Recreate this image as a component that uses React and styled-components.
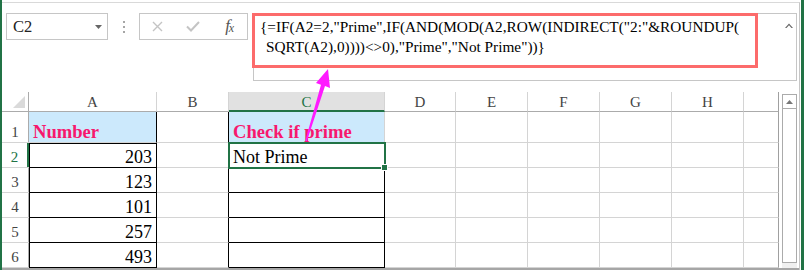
import React from 'react';
import styled, { createGlobalStyle } from 'styled-components';

const GREEN = '#217346';
const GRID = '#d4d4d4';
const HDR = '#ababab';
const BLUE = '#cce9fc';
const PINK = '#f7186e';

const Global = createGlobalStyle`
  html, body { margin: 0; padding: 0; background: #fff; }
  body { width: 804px; height: 270px; overflow: hidden; font-family: "Liberation Serif", "Times New Roman", serif; }
`;

const Frame = styled.div`
  position: relative;
  width: 804px;
  height: 270px;
  box-sizing: border-box;
  border-left: 2px solid ${GREEN};
  border-right: 3px solid ${GREEN};
  padding: 2px 1px 0 0;
  background: #fff;
`;

const Inner = styled.div`
  height: 100%;
  box-sizing: border-box;
  border-top: 1px solid #d9d9d9;
  border-right: 1px solid #c6c6c6;
  display: flex;
  flex-direction: column;
`;

const Toolbar = styled.div`
  height: 89px;
  flex: none;
  box-sizing: border-box;
  padding: 10px 0 0 4px;
  display: flex;
  align-items: flex-start;
`;

const NameBox = styled.div`
  width: 102px;
  height: 27px;
  box-sizing: border-box;
  border: 1px solid #c6c6c6;
  display: flex;
  align-items: center;
  justify-content: space-between;
  padding: 0 5px 0 6px;
  font-size: 16.5px;
  color: #222;
`;

const Caret = styled.svg`
  display: block;
  flex: none;
`;

const Dots = styled.div`
  width: 31px;
  display: flex;
  flex-direction: column;
  align-items: center;
  gap: 3px;
  padding-top: 8px;
`;

const Dot = styled.span`
  width: 2px;
  height: 2px;
  background: #a6a6a6;
`;

const FxGroup = styled.div`
  width: 109px;
  height: 27px;
  box-sizing: border-box;
  border: 1px solid #c6c6c6;
  display: grid;
  grid-template-columns: repeat(3, 1fr);
  align-items: center;
  justify-items: center;
`;

const Fx = styled.span`
  font-style: italic;
  font-size: 17px;
  line-height: 17px;
  color: #555;
  letter-spacing: -1px;
  & sub { font-size: 12px; vertical-align: -1px; }
`;

const FormulaBar = styled.div`
  position: relative;
  margin-left: 5px;
  width: 544px;
  height: 68px;
  box-sizing: border-box;
  border: 1px solid #c6c6c6;
  padding: 3px 0 0 6px;
  font-size: 15.3px;
  line-height: 20px;
  color: #000;
`;

const FormulaLine = styled.div`
  white-space: pre;
  padding-left: ${p => p.$indent || 0}px;
`;

const RedBox = styled.div`
  position: absolute;
  left: -2px;
  top: -1px;
  width: 506px;
  height: 55px;
  box-sizing: border-box;
  border: 3px solid #fc6b6b;
  pointer-events: none;
`;

const BarCaret = styled.svg`
  position: absolute;
  right: 3px;
  top: 9px;
`;

const Sheet = styled.div`
  flex: 1;
  display: flex;
  border-bottom: 2px solid #a6a6a6;
  min-height: 0;
`;

const Grid = styled.div`
  display: grid;
  grid-template-columns: 27px 128px 72px 156px 71px 72px 72px 72px 72px 35px;
  grid-template-rows: 20px 31px repeat(5, 25px);
`;

const Corner = styled.div`
  position: relative;
  border-right: 1px solid ${HDR};
  border-bottom: 1px solid ${HDR};
  box-sizing: border-box;
  display: flex;
  align-items: flex-end;
  justify-content: flex-end;
  padding: 0 3px 3px 0;
`;

const ColHead = styled.div`
  box-sizing: border-box;
  display: flex;
  align-items: flex-end;
  justify-content: center;
  padding-bottom: ${p => (p.$active ? 0 : 1)}px;
  font-size: 15px;
  line-height: 15px;
  color: ${p => (p.$active ? GREEN : '#444')};
  background: ${p => (p.$active ? '#e1e1e1' : '#fff')};
  border-right: 1px solid ${p => p.$edge || GRID};
  border-bottom: ${p => (p.$active ? `2px solid ${GREEN}` : `1px solid ${HDR}`)};
`;

const RowHead = styled.div`
  box-sizing: border-box;
  display: flex;
  align-items: flex-end;
  justify-content: center;
  padding: 0 ${p => (p.$active ? 2 : 1)}px 2px 0;
  font-size: 15px;
  line-height: 15px;
  color: ${p => (p.$active ? GREEN : '#444')};
  border-bottom: 1px solid ${GRID};
  box-shadow: inset ${p => (p.$active ? -2 : -1)}px 0 0 ${p => (p.$active ? GREEN : HDR)};
`;

const shadows = p =>
  [p.$l && `inset 1px 0 0 ${p.$l}`, p.$t && `inset 0 1px 0 ${p.$t}`].filter(Boolean).join(', ') || 'none';

const Cell = styled.div`
  position: relative;
  z-index: ${p => (p.$selected ? 2 : 0)};
  box-sizing: border-box;
  display: flex;
  align-items: flex-end;
  justify-content: ${p => (p.$num ? 'flex-end' : 'flex-start')};
  padding: 0 4px 1px 4px;
  font-size: ${p => (p.$bold ? 18.6 : 18)}px;
  line-height: 18px;
  white-space: nowrap;
  font-weight: ${p => (p.$bold ? 700 : 400)};
  color: ${p => (p.$bold ? PINK : '#000')};
  background: ${p => p.$fill || '#fff'};
  border-right: 1px solid ${p => p.$r || GRID};
  border-bottom: 1px solid ${p => p.$b || GRID};
  box-shadow: ${shadows};

  ${p =>
    p.$selected &&
    `
    &::after {
      content: '';
      position: absolute;
      left: -1px; top: -1px; right: -2px; bottom: -2px;
      border: 2px solid ${GREEN};
    }
    &::before {
      content: '';
      position: absolute;
      right: -4px; bottom: -4px;
      width: 5px; height: 5px;
      background: ${GREEN};
      border: 1px solid #fff;
      z-index: 3;
    }
  `}
`;

const ScrollCol = styled.div`
  flex: 1;
  display: flex;
  flex-direction: column;
  padding: 2px 2px 0 3px;
`;

const ScrollTrack = styled.div`
  flex: 1;
  border: 1px solid ${HDR};
  display: flex;
  flex-direction: column;
`;

const ScrollUp = styled.div`
  height: 13px;
  border-bottom: 1px solid ${HDR};
  display: flex;
  align-items: center;
  justify-content: center;
`;

const ScrollFoot = styled.div`
  height: 5px;
  background: #f0f0f0;
`;

const Arrow = styled.svg`
  position: absolute;
  left: -2px;
  top: 0;
  z-index: 10;
  pointer-events: none;
`;

const letters = ['A', 'B', 'C', 'D', 'E', 'F', 'G', 'H', ''];
const nums = [203, 123, 101, 257, 493];
const BLK = '#000';

function DataRow({ n, value }) {
  const selected = n === 2;
  return (
    <>
      <RowHead $active={selected}>{n}</RowHead>
      <Cell $num $r={BLK} $b={BLK} $l={BLK} $t={n === 2 ? BLK : undefined}>{value}</Cell>
      <Cell $r={BLK} />
      {selected ? (
        <Cell $selected $r={BLK} $b={BLK}>Not Prime</Cell>
      ) : (
        <Cell $r={BLK} $b={BLK} />
      )}
      <Cell />
      <Cell />
      <Cell />
      <Cell />
      <Cell />
      <Cell $r="#a0a0a0" />
    </>
  );
}

export default function App() {
  return (
    <>
      <Global />
      <Frame>
        <Inner>
          <Toolbar>
            <NameBox>
              <span>C2</span>
              <Caret width="7" height="4" viewBox="0 0 7 4">
                <path d="M0 0 H7 L3.5 4 Z" fill="#666" />
              </Caret>
            </NameBox>
            <Dots>
              <Dot />
              <Dot />
              <Dot />
            </Dots>
            <FxGroup>
              <svg width="11" height="11" viewBox="0 0 11 11">
                <path d="M1 1 L10 10 M10 1 L1 10" stroke="#c4c4c4" strokeWidth="1.4" />
              </svg>
              <svg width="14" height="11" viewBox="0 0 14 11">
                <path d="M1 5.5 L5 9.5 L13 1" stroke="#c4c4c4" strokeWidth="2" fill="none" />
              </svg>
              <Fx>
                f<sub>x</sub>
              </Fx>
            </FxGroup>
            <FormulaBar>
              <FormulaLine>{'{=IF(A2=2,"Prime",IF(AND(MOD(A2,ROW(INDIRECT("2:"&ROUNDUP('}</FormulaLine>
              <FormulaLine $indent={6}>{'SQRT(A2),0))))<>0),"Prime","Not Prime"))}'}</FormulaLine>
              <RedBox />
              <BarCaret width="8" height="5" viewBox="0 0 8 5">
                <path d="M0 5 L4 0.5 L8 5 L6.5 5 L4 2.3 L1.5 5 Z" fill="#666" />
              </BarCaret>
            </FormulaBar>
          </Toolbar>
          <Sheet>
            <Grid>
              <Corner>
                <svg width="12" height="12" viewBox="0 0 12 12">
                  <path d="M12 0 V12 H0 Z" fill="#dadada" />
                </svg>
              </Corner>
              {letters.map((l, i) => (
                <ColHead key={i} $active={l === 'C'} $edge={i === letters.length - 1 ? '#a0a0a0' : undefined}>
                  {l}
                </ColHead>
              ))}

              <RowHead>1</RowHead>
              <Cell $bold $fill={BLUE} $r={BLK}>Number</Cell>
              <Cell $r={BLK} />
              <Cell $bold $fill={BLUE}>Check if prime</Cell>
              <Cell />
              <Cell />
              <Cell />
              <Cell />
              <Cell />
              <Cell $r="#a0a0a0" />

              {nums.map((v, i) => (
                <DataRow key={i} n={i + 2} value={v} />
              ))}
            </Grid>
            <ScrollCol>
              <ScrollTrack>
                <ScrollUp>
                  <svg width="7" height="4" viewBox="0 0 7 4">
                    <path d="M0 4 L3.5 0 L7 4 Z" fill="#777" />
                  </svg>
                </ScrollUp>
              </ScrollTrack>
              <ScrollFoot />
            </ScrollCol>
          </Sheet>
        </Inner>
        <Arrow width="804" height="270" viewBox="0 0 804 270">
          <polygon
            points="328,69 330,88 325,86 306.8,141.3 305.3,140.8 321,84.7 316,83"
            fill="#ff1aff"
          />
        </Arrow>
      </Frame>
    </>
  );
}
